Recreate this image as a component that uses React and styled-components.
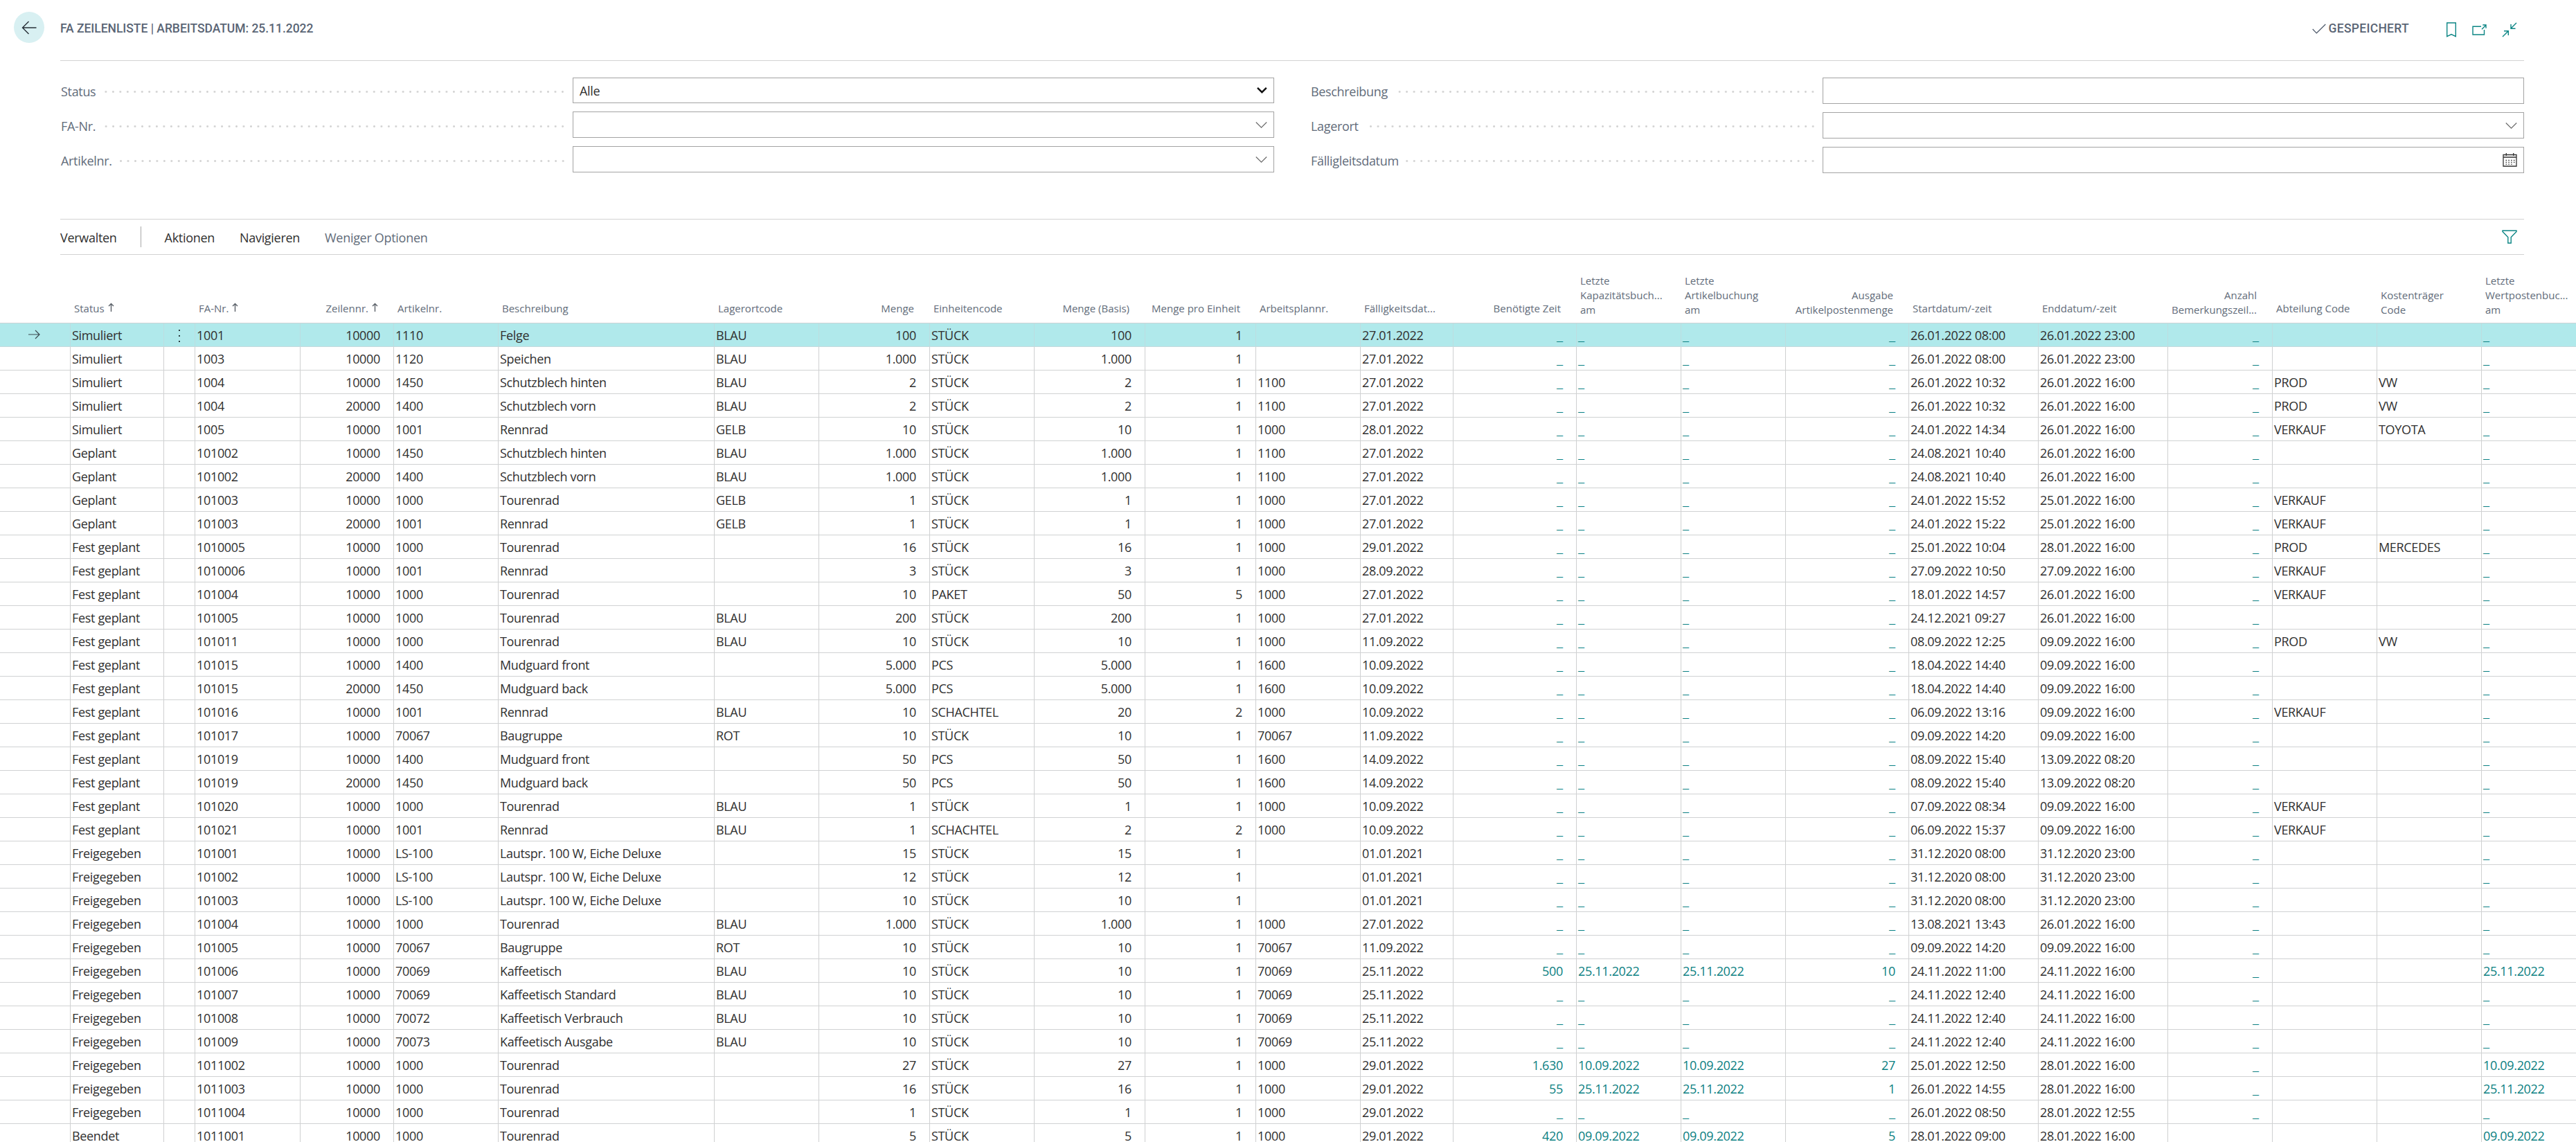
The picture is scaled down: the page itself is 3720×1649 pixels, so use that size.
import React                        from 'react';
import styled, {createGlobalStyle} from 'styled-components';

const GlobalStyle = createGlobalStyle`
    body {
        margin: 0;
        background: #fff;
        overflow: hidden;
    }
`;

const Page = styled.div`
    width: 3720px;
    height: 1649px;
    overflow: hidden;
    box-sizing: border-box;
    background: #fff;
    color: #303030;
    font-family: "Open Sans", "Noto Sans", sans-serif;
    font-size: 18px;
    letter-spacing: -0.33px;
`;

const Header = styled.header`
    display: flex;
    align-items: center;
    height: 79px;
    padding: 0 75px 0 20px;
`;

const BackButton = styled.button`
    display: flex;
    align-items: center;
    justify-content: center;
    width: 44px;
    height: 45px;
    margin-right: 23px;
    padding: 0;
    border: none;
    border-radius: 50%;
    background: #d8f0f2;
`;

const Title = styled.h1`
    margin: 3px 0 0;
    flex: 1;
    color: #5a6575;
    font-family: Roboto, sans-serif;
    font-size: 17.5px;
    font-weight: 500;
    letter-spacing: -0.03px;
`;

const SavedMark = styled.div`
    display: flex;
    align-items: center;
    gap: 3px;
    margin: 3px 53px 0 0;
    color: #5a6575;
    font-family: Roboto, sans-serif;
    font-size: 17.5px;
    font-weight: 500;
    letter-spacing: 0.3px;
`;

const HeaderActions = styled.div`
    display: flex;
    align-items: center;
    gap: 22px;
    padding: 6px 10px 0 0;
    color: #0b8584;
`;

const Content = styled.main`
    margin: 8px 75px 0 87px;
    border-top: 1px solid #d2d2d2;
`;

const Fields = styled.section`
    display: flex;
    gap: 52px;
    height: 228px;
    padding-top: 24px;
    box-sizing: border-box;
`;

const FieldColumn = styled.div`
    display: flex;
    flex-direction: column;
    gap: 12px;
    width: 1753px;
`;

const Field = styled.div`
    display: flex;
    height: ${({$short}) => ($short ? 37 : 38)}px;
`;

const FieldLabel = styled.label`
    display: flex;
    width: 740px;
    height: 38px;
    padding: ${({$lower}) => ($lower ? 2 : 1)}px 0 0 1px;
    box-sizing: border-box;
    color: #626c7a;
    line-height: 38px;
`;

const Leader = styled.span`
    flex: 1;
    height: 3px;
    margin: 18px 9px 0 9px;
    background: radial-gradient(circle at center, #d2d2d2 1px, transparent 1.8px) right center / 10.48px 3px repeat-x;
`;

const Input = styled.div`
    display: flex;
    align-items: center;
    justify-content: space-between;
    width: 1013px;
    padding: 0 9px;
    box-sizing: border-box;
    border: 1px solid #a3a3a3;
    line-height: 36px;
`;

const ActionBar = styled.nav`
    display: flex;
    align-items: center;
    height: 52px;
    margin: 0 75px 0 87px;
    padding-right: 10px;
    box-sizing: border-box;
    border-top: 1px solid #d2d2d2;
    border-bottom: 1px solid #d2d2d2;
`;

const Action = styled.a`
    margin-right: 36px;
    padding-top: 1px;
    color: ${({$muted}) => ($muted ? '#626c7a' : '#303030')};
    letter-spacing: -0.3px;
`;

const Divider = styled.span`
    width: 1px;
    height: 30px;
    margin: 0 34px 0 -2px;
    background: #a8a8a8;
`;

const FilterButton = styled.span`
    display: flex;
    margin-left: auto;
    color: #0b8584;
`;

const GRID = '101px 135px 45px 152px 135px 151px 312px 151px 160px 151px 160px 160px 151px 134px 178px 151px 151px 178px 187px 187px 151px 151px 151px 137px';

const HeadRow = styled.div`
    display: grid;
    grid-template-columns: ${GRID};
    align-items: end;
    height: 99px;
    box-sizing: border-box;
    border-bottom: 1px solid #cdd3d5;
`;

const HeadCell = styled.div`
    display: flex;
    justify-content: ${({$right}) => ($right ? 'flex-end' : 'flex-start')};
    gap: 5px;
    padding: 0 ${({$right}) => ($right ? 22 : 0)}px ${({$stacked}) => ($stacked ? 8 : 10)}px 6px;
    color: #626c7a;
    font-size: 15px;
    letter-spacing: 0;
    line-height: 21px;
    text-align: ${({$right}) => ($right ? 'right' : 'left')};
    white-space: pre;

    svg {
        margin-top: 2px;
    }
`;

const Row = styled.div`
    display: grid;
    grid-template-columns: ${GRID};
    height: 34px;
    box-sizing: border-box;
    border-bottom: 1px solid ${({$selected}) => ($selected ? '#c4dadd' : '#d0d2d3')};
    background: ${({$selected}) => ($selected ? '#b0e9eb' : '#fff')};
    --line: ${({$selected}) => ($selected ? '#bddde0' : '#cfd0d1')};
`;

const Cell = styled.div`
    height: 33px;
    padding: 0 ${({$right}) => ($right ? 19 : 0)}px 0 2px;
    border-left: 1px solid var(--line);
    color: ${({$link}) => ($link ? '#0b8082' : 'inherit')};
    line-height: 35px;
    text-align: ${({$right}) => ($right ? 'right' : 'left')};
    white-space: nowrap;
`;

const Gutter = styled.div`
    display: flex;
    align-items: center;
    padding: 0 0 1px 41px;
`;

const MenuCell = styled.div`
    display: flex;
    align-items: center;
    justify-content: center;
    padding-top: 2px;
    border-left: 1px solid var(--line);
`;

const Empty = styled.span`
    font-size: 22px;
    font-weight: 300;
    letter-spacing: 0;
    line-height: 0;
`;

const BackIcon = () => (
    <svg width="22" height="20" viewBox="0 0 22 20" fill="none" stroke="#273038" strokeWidth="1.4">
        <path d="M21.5 10H1.5M10.5 1L1.5 10l9 9"/>
    </svg>
);

const CheckIcon = () => (
    <svg width="20" height="15" viewBox="0 0 20 15" fill="none" stroke="#505c6d" strokeWidth="1.2">
        <path d="M.7 8l5.6 5.8L19.3 1"/>
    </svg>
);

const BookmarkIcon = () => (
    <svg width="16" height="22" viewBox="0 0 16 22" fill="none" stroke="currentColor" strokeWidth="1.4">
        <path d="M1.7 1h12.6v19.6L8 17.6l-6.3 3z"/>
    </svg>
);

const PopOutIcon = () => (
    <svg width="21" height="16" viewBox="0 0 21 16" fill="none" stroke="currentColor" strokeWidth="1.4">
        <path d="M13 3.2H1V15h16.5V8M14 7.2L20 1.2M15.3 1H20v4.8"/>
    </svg>
);

const CollapseIcon = () => (
    <svg width="22" height="22" viewBox="0 0 22 22" fill="none" stroke="currentColor" strokeWidth="1.4">
        <path d="M21 1l-8 8M13 3v6.3h6.5M1 21l8.3-8.3M3 12.7h6.3V19"/>
    </svg>
);

const ChevronIcon = ({bold}) => (
    <svg width="17" height="10" viewBox="0 0 17 10" fill="none" stroke={bold ? '#111' : '#6a6a6a'}
         strokeWidth={bold ? 2.4 : 1.2}>
        <path d={bold ? 'M3 .8l6.4 6.4L15.8.8' : 'M.8 1.5l7.7 7.6 7.7-7.6'}/>
    </svg>
);

const CalendarIcon = () => (
    <svg width="21" height="20" viewBox="0 0 21 20" fill="none" stroke="#333" strokeWidth="1.3">
        <path d="M1 2.5h19V19H1zM1 6h19M5.3 0v4M15.7 0v4"/>
        <path d="M4.5 10.5h13M4.5 13.3h13M4.5 16.1h10" strokeDasharray="1.5 2.3"/>
    </svg>
);

const FilterIcon = () => (
    <svg width="22" height="20" viewBox="0 0 22 20" fill="none" stroke="currentColor" strokeWidth="1.4">
        <path d="M1 1h20v1.5l-7.8 8V19H8.800v-8.500L1 2.500z"/>
    </svg>
);

const SortIcon = () => (
    <svg width="9" height="13" viewBox="0 0 9 13" fill="none" stroke="#5a6068" strokeWidth="1.4">
        <path d="M4.500 13V1.500M1 5l3.500-3.500L8 5"/>
    </svg>
);

const RowArrowIcon = () => (
    <svg width="17" height="14" viewBox="0 0 17 14" fill="none" stroke="#3a4a50" strokeWidth="1.2">
        <path d="M0 7h16M10 1l6 6-6 6"/>
    </svg>
);

const MoreIcon = () => (
    <svg width="4" height="20" viewBox="0 0 4 20" fill="#2c3c40">
        <rect x="1" y="1" width="2" height="2"/>
        <rect x="1" y="9" width="2" height="2"/>
        <rect x="1" y="17" width="2" height="2"/>
    </svg>
);

const columns = [
    {key: 'status', title: 'Status', sorted: true},
    {key: 'menu', title: ''},
    {key: 'orderNo', title: 'FA-Nr.', sorted: true},
    {key: 'lineNo', title: 'Zeilennr.', sorted: true, right: true},
    {key: 'itemNo', title: 'Artikelnr.'},
    {key: 'description', title: 'Beschreibung'},
    {key: 'location', title: 'Lagerortcode'},
    {key: 'quantity', title: 'Menge', right: true},
    {key: 'unit', title: 'Einheitencode'},
    {key: 'quantityBase', title: 'Menge (Basis)', right: true},
    {key: 'perUnit', title: 'Menge pro Einheit', right: true},
    {key: 'routing', title: 'Arbeitsplannr.'},
    {key: 'dueDate', title: 'Fälligkeitsdat...'},
    {key: 'time', title: 'Benötigte Zeit', right: true, link: true},
    {key: 'posted', title: 'Letzte\nKapazitätsbuch...\nam', link: true},
    {key: 'posted', title: 'Letzte\nArtikelbuchung\nam', link: true},
    {key: 'output', title: 'Ausgabe\nArtikelpostenmenge', right: true, link: true},
    {key: 'start', title: 'Startdatum/-zeit'},
    {key: 'end', title: 'Enddatum/-zeit'},
    {key: 'comments', title: 'Anzahl\nBemerkungszeil...', right: true, link: true},
    {key: 'department', title: 'Abteilung Code'},
    {key: 'costObject', title: 'Kostenträger\nCode'},
    {key: 'posted', title: 'Letzte\nWertpostenbuc...\nam', link: true},
];

const fieldKeys = [
    'status', 'orderNo', 'lineNo', 'itemNo', 'description', 'location', 'quantity', 'unit', 'quantityBase',
    'perUnit', 'routing', 'dueDate', 'start', 'end', 'department', 'costObject', 'time', 'posted', 'output',
];

const lines = `
Simuliert|1001|10000|1110|Felge|BLAU|100|STÜCK|100|1||27.01.2022|26.01.2022 08:00|26.01.2022 23:00
Simuliert|1003|10000|1120|Speichen|BLAU|1.000|STÜCK|1.000|1||27.01.2022|26.01.2022 08:00|26.01.2022 23:00
Simuliert|1004|10000|1450|Schutzblech hinten|BLAU|2|STÜCK|2|1|1100|27.01.2022|26.01.2022 10:32|26.01.2022 16:00|PROD|VW
Simuliert|1004|20000|1400|Schutzblech vorn|BLAU|2|STÜCK|2|1|1100|27.01.2022|26.01.2022 10:32|26.01.2022 16:00|PROD|VW
Simuliert|1005|10000|1001|Rennrad|GELB|10|STÜCK|10|1|1000|28.01.2022|24.01.2022 14:34|26.01.2022 16:00|VERKAUF|TOYOTA
Geplant|101002|10000|1450|Schutzblech hinten|BLAU|1.000|STÜCK|1.000|1|1100|27.01.2022|24.08.2021 10:40|26.01.2022 16:00
Geplant|101002|20000|1400|Schutzblech vorn|BLAU|1.000|STÜCK|1.000|1|1100|27.01.2022|24.08.2021 10:40|26.01.2022 16:00
Geplant|101003|10000|1000|Tourenrad|GELB|1|STÜCK|1|1|1000|27.01.2022|24.01.2022 15:52|25.01.2022 16:00|VERKAUF
Geplant|101003|20000|1001|Rennrad|GELB|1|STÜCK|1|1|1000|27.01.2022|24.01.2022 15:22|25.01.2022 16:00|VERKAUF
Fest geplant|1010005|10000|1000|Tourenrad||16|STÜCK|16|1|1000|29.01.2022|25.01.2022 10:04|28.01.2022 16:00|PROD|MERCEDES
Fest geplant|1010006|10000|1001|Rennrad||3|STÜCK|3|1|1000|28.09.2022|27.09.2022 10:50|27.09.2022 16:00|VERKAUF
Fest geplant|101004|10000|1000|Tourenrad||10|PAKET|50|5|1000|27.01.2022|18.01.2022 14:57|26.01.2022 16:00|VERKAUF
Fest geplant|101005|10000|1000|Tourenrad|BLAU|200|STÜCK|200|1|1000|27.01.2022|24.12.2021 09:27|26.01.2022 16:00
Fest geplant|101011|10000|1000|Tourenrad|BLAU|10|STÜCK|10|1|1000|11.09.2022|08.09.2022 12:25|09.09.2022 16:00|PROD|VW
Fest geplant|101015|10000|1400|Mudguard front||5.000|PCS|5.000|1|1600|10.09.2022|18.04.2022 14:40|09.09.2022 16:00
Fest geplant|101015|20000|1450|Mudguard back||5.000|PCS|5.000|1|1600|10.09.2022|18.04.2022 14:40|09.09.2022 16:00
Fest geplant|101016|10000|1001|Rennrad|BLAU|10|SCHACHTEL|20|2|1000|10.09.2022|06.09.2022 13:16|09.09.2022 16:00|VERKAUF
Fest geplant|101017|10000|70067|Baugruppe|ROT|10|STÜCK|10|1|70067|11.09.2022|09.09.2022 14:20|09.09.2022 16:00
Fest geplant|101019|10000|1400|Mudguard front||50|PCS|50|1|1600|14.09.2022|08.09.2022 15:40|13.09.2022 08:20
Fest geplant|101019|20000|1450|Mudguard back||50|PCS|50|1|1600|14.09.2022|08.09.2022 15:40|13.09.2022 08:20
Fest geplant|101020|10000|1000|Tourenrad|BLAU|1|STÜCK|1|1|1000|10.09.2022|07.09.2022 08:34|09.09.2022 16:00|VERKAUF
Fest geplant|101021|10000|1001|Rennrad|BLAU|1|SCHACHTEL|2|2|1000|10.09.2022|06.09.2022 15:37|09.09.2022 16:00|VERKAUF
Freigegeben|101001|10000|LS-100|Lautspr. 100 W, Eiche Deluxe||15|STÜCK|15|1||01.01.2021|31.12.2020 08:00|31.12.2020 23:00
Freigegeben|101002|10000|LS-100|Lautspr. 100 W, Eiche Deluxe||12|STÜCK|12|1||01.01.2021|31.12.2020 08:00|31.12.2020 23:00
Freigegeben|101003|10000|LS-100|Lautspr. 100 W, Eiche Deluxe||10|STÜCK|10|1||01.01.2021|31.12.2020 08:00|31.12.2020 23:00
Freigegeben|101004|10000|1000|Tourenrad|BLAU|1.000|STÜCK|1.000|1|1000|27.01.2022|13.08.2021 13:43|26.01.2022 16:00
Freigegeben|101005|10000|70067|Baugruppe|ROT|10|STÜCK|10|1|70067|11.09.2022|09.09.2022 14:20|09.09.2022 16:00
Freigegeben|101006|10000|70069|Kaffeetisch|BLAU|10|STÜCK|10|1|70069|25.11.2022|24.11.2022 11:00|24.11.2022 16:00|||500|25.11.2022|10
Freigegeben|101007|10000|70069|Kaffeetisch Standard|BLAU|10|STÜCK|10|1|70069|25.11.2022|24.11.2022 12:40|24.11.2022 16:00
Freigegeben|101008|10000|70072|Kaffeetisch Verbrauch|BLAU|10|STÜCK|10|1|70069|25.11.2022|24.11.2022 12:40|24.11.2022 16:00
Freigegeben|101009|10000|70073|Kaffeetisch Ausgabe|BLAU|10|STÜCK|10|1|70069|25.11.2022|24.11.2022 12:40|24.11.2022 16:00
Freigegeben|1011002|10000|1000|Tourenrad||27|STÜCK|27|1|1000|29.01.2022|25.01.2022 12:50|28.01.2022 16:00|||1.630|10.09.2022|27
Freigegeben|1011003|10000|1000|Tourenrad||16|STÜCK|16|1|1000|29.01.2022|26.01.2022 14:55|28.01.2022 16:00|||55|25.11.2022|1
Freigegeben|1011004|10000|1000|Tourenrad||1|STÜCK|1|1|1000|29.01.2022|26.01.2022 08:50|28.01.2022 12:55
Beendet|1011001|10000|1000|Tourenrad||5|STÜCK|5|1|1000|29.01.2022|28.01.2022 09:00|28.01.2022 16:00|||420|09.09.2022|5
`.trim().split('\n').map(line => {
    const parts = line.split('|');
    return Object.fromEntries(fieldKeys.map((key, i) => [key, parts[i] || '']));
});

const FilterField = ({label, value, icon, short, lower}) => (
    <Field $short={short}>
        <FieldLabel $lower={lower}>{label}<Leader/></FieldLabel>
        <Input>
            <span>{value}</span>
            {icon}
        </Input>
    </Field>
);

const TableHead = () => (
    <HeadRow>
        <span/>
        {columns.map(({title, sorted, right}, i) => (
            <HeadCell key={i} $right={right} $stacked={title.includes('\n')}>
                {title}
                {sorted && <SortIcon/>}
            </HeadCell>
        ))}
    </HeadRow>
);

const TableRow = ({line, selected}) => (
    <Row $selected={selected}>
        <Gutter>{selected && <RowArrowIcon/>}</Gutter>
        {columns.map(({key, right, link}, i) => key === 'menu' ? (
            <MenuCell key={i}>{selected && <MoreIcon/>}</MenuCell>
        ) : (
            <Cell key={i} $right={right} $link={link}>
                {line[key] || (link && <Empty>_</Empty>)}
            </Cell>
        ))}
    </Row>
);

export default function App() {
    return (
        <Page>
            <GlobalStyle/>
            <Header>
                <BackButton><BackIcon/></BackButton>
                <Title>FA ZEILENLISTE | ARBEITSDATUM: 25.11.2022</Title>
                <SavedMark><CheckIcon/>GESPEICHERT</SavedMark>
                <HeaderActions>
                    <BookmarkIcon/>
                    <PopOutIcon/>
                    <CollapseIcon/>
                </HeaderActions>
            </Header>

            <Content>
                <Fields>
                    <FieldColumn>
                        <FilterField label="Status" value="Alle" icon={<ChevronIcon bold/>} short/>
                        <FilterField label="FA-Nr." icon={<ChevronIcon/>} lower/>
                        <FilterField label="Artikelnr." icon={<ChevronIcon/>} lower/>
                    </FieldColumn>
                    <FieldColumn>
                        <FilterField label="Beschreibung"/>
                        <FilterField label="Lagerort" icon={<ChevronIcon/>}/>
                        <FilterField label="Fälligleitsdatum" icon={<CalendarIcon/>}/>
                    </FieldColumn>
                </Fields>
            </Content>

            <ActionBar>
                <Action>Verwalten</Action>
                <Divider/>
                <Action>Aktionen</Action>
                <Action>Navigieren</Action>
                <Action $muted>Weniger Optionen</Action>
                <FilterButton><FilterIcon/></FilterButton>
            </ActionBar>

            <TableHead/>
            {lines.map((line, i) => <TableRow key={i} line={line} selected={i === 0}/>)}
        </Page>
    );
}
